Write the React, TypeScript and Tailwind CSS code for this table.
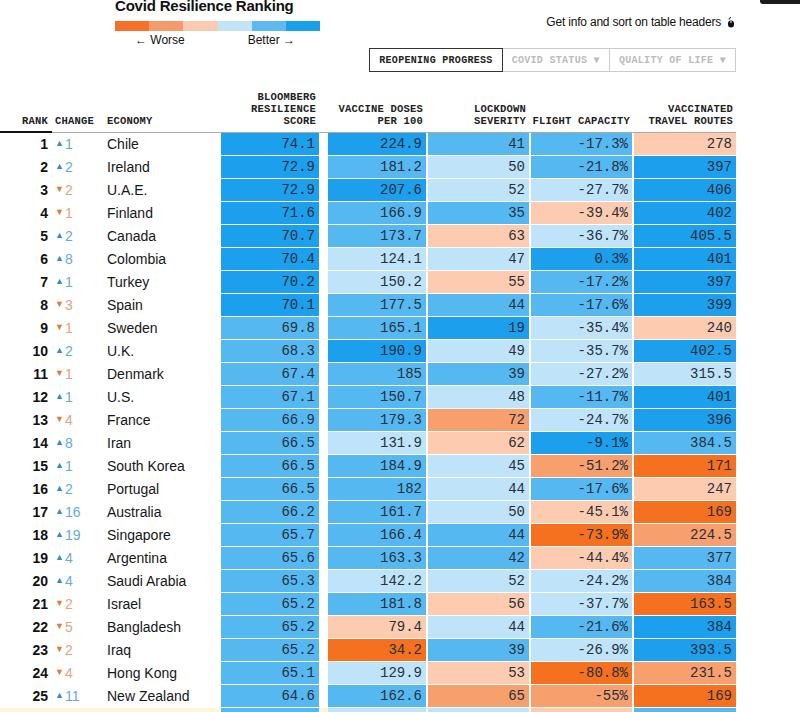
const cellBg: Record<string, string> = {
  D: "bg-[#1c9fec]",
  M: "bg-[#55b8f1]",
  L: "bg-[#bfe3f8]",
  P: "bg-[#fccbb0]",
  O: "bg-[#f7a06e]",
  X: "bg-[#f5701f]",
}

type Row = [number, "up" | "dn", number, string, string, string, string, string, string, string]

const rows: Row[] = [
  [1, "up", 1, "Chile", "74.1", "224.9", "41", "-17.3%", "278", "DDMMP"],
  [2, "up", 2, "Ireland", "72.9", "181.2", "50", "-21.8%", "397", "DMLMD"],
  [3, "dn", 2, "U.A.E.", "72.9", "207.6", "52", "-27.7%", "406", "DDLLD"],
  [4, "dn", 1, "Finland", "71.6", "166.9", "35", "-39.4%", "402", "DMMPD"],
  [5, "up", 2, "Canada", "70.7", "173.7", "63", "-36.7%", "405.5", "DMPLD"],
  [6, "up", 8, "Colombia", "70.4", "124.1", "47", "0.3%", "401", "DLLDD"],
  [7, "up", 1, "Turkey", "70.2", "150.2", "55", "-17.2%", "397", "DLPMD"],
  [8, "dn", 3, "Spain", "70.1", "177.5", "44", "-17.6%", "399", "DMMMD"],
  [9, "dn", 1, "Sweden", "69.8", "165.1", "19", "-35.4%", "240", "MMDLP"],
  [10, "up", 2, "U.K.", "68.3", "190.9", "49", "-35.7%", "402.5", "MDLLD"],
  [11, "dn", 1, "Denmark", "67.4", "185", "39", "-27.2%", "315.5", "MMMLL"],
  [12, "up", 1, "U.S.", "67.1", "150.7", "48", "-11.7%", "401", "MMLMD"],
  [13, "dn", 4, "France", "66.9", "179.3", "72", "-24.7%", "396", "MMOLD"],
  [14, "up", 8, "Iran", "66.5", "131.9", "62", "-9.1%", "384.5", "MLPDM"],
  [15, "up", 1, "South Korea", "66.5", "184.9", "45", "-51.2%", "171", "MMLOX"],
  [16, "up", 2, "Portugal", "66.5", "182", "44", "-17.6%", "247", "MMLMP"],
  [17, "up", 16, "Australia", "66.2", "161.7", "50", "-45.1%", "169", "MMLPX"],
  [18, "up", 19, "Singapore", "65.7", "166.4", "44", "-73.9%", "224.5", "MMMXO"],
  [19, "up", 4, "Argentina", "65.6", "163.3", "42", "-44.4%", "377", "MMMPM"],
  [20, "up", 4, "Saudi Arabia", "65.3", "142.2", "52", "-24.2%", "384", "MLLLM"],
  [21, "dn", 2, "Israel", "65.2", "181.8", "56", "-37.7%", "163.5", "MMPLX"],
  [22, "dn", 5, "Bangladesh", "65.2", "79.4", "44", "-21.6%", "384", "MPLMD"],
  [23, "dn", 2, "Iraq", "65.2", "34.2", "39", "-26.9%", "393.5", "MXMLD"],
  [24, "dn", 4, "Hong Kong", "65.1", "129.9", "53", "-80.8%", "231.5", "MLPXO"],
  [25, "up", 11, "New Zealand", "64.6", "162.6", "65", "-55%", "169", "MMOOX"],
  [26, "dn", 1, "Norway", "64.4", "150.9", "46", "-40.1%", "384", "MLLPM"],
]

const mono = "font-['Liberation_Mono',monospace]"
const sans = "font-['Liberation_Sans',Arial,sans-serif]"

function MouseIcon() {
  return (
    <svg width="8" height="11" viewBox="0 0 8 11" className="ml-[6px]">
      <path d="M4 0.5 C2.4 0.5 2 1.6 2.2 2.6" stroke="#111" strokeWidth="1" fill="none" />
      <rect x="1" y="3.5" width="6" height="7" rx="3" fill="#111" />
      <line x1="4" y1="4" x2="4" y2="6" stroke="#fff" strokeWidth="1" />
    </svg>
  )
}

function Cell({ v, c, w, ml }: { v: string; c: string; w: string; ml: string }) {
  return (
    <div className={`${w} ${ml} ${cellBg[c]} h-[22px] flex items-center justify-end pr-[4px] text-[14px] text-[#26303c] ${mono}`}>
      {v}
    </div>
  )
}

export default function App() {
  return (
    <div className={`relative w-[800px] h-[712px] overflow-hidden bg-white text-[#111] ${sans}`}>
      <div className="absolute top-0 right-0 w-[40px] h-[4px] bg-[#1b1b1b] rounded-bl-[3px]" />

      {/* top: legend + tabs */}
      <div className="w-[736px] flex justify-between">
        <div className="pl-[115px] mt-[-3px]">
          <div className="text-[15px] font-bold leading-[18px] tracking-[-0.2px]">Covid Resilience Ranking</div>
          <div className="flex mt-[6px] w-[205px] h-[10px]">
            <div className="flex-1 bg-[#f7702a]" />
            <div className="flex-1 bg-[#f59a6c]" />
            <div className="flex-1 bg-[#fbcbb1]" />
            <div className="flex-1 bg-[#c1e4f7]" />
            <div className="flex-1 bg-[#5db9f0]" />
            <div className="flex-1 bg-[#1a9fec]" />
          </div>
          <div className="flex justify-between pl-[20px] pr-[25px] mt-[2px] text-[12px] leading-[15px]">
            <span>← Worse</span>
            <span>Better →</span>
          </div>
        </div>
        <div className="flex flex-col items-end">
          <div className="flex items-center mt-[15px] pr-[1px] text-[12px] leading-[14px] tracking-[-0.2px]">
            Get info and sort on table headers
            <MouseIcon />
          </div>
          <div className={`flex mt-[19px] text-[10px] font-bold tracking-[0.3px] ${mono}`}>
            <div className="h-[24px] px-[9px] flex items-center border border-[#333] text-[#222]">REOPENING PROGRESS</div>
            <div className="h-[24px] px-[9px] flex items-center border border-l-0 border-[#ccc] text-[#bbb]">COVID STATUS ▼</div>
            <div className="h-[24px] px-[9px] flex items-center border border-l-0 border-[#ccc] text-[#bbb]">QUALITY OF LIFE ▼</div>
          </div>
        </div>
      </div>

      {/* table header */}
      <div className={`flex items-end w-[736px] mt-[19px] pb-[4px] text-[10.5px] font-bold leading-[12px] tracking-[0.2px] text-[#222] ${mono}`}>
        <div className="w-[52px] text-right pr-[4px]">RANK</div>
        <div className="w-[55px] pl-[3px]">CHANGE</div>
        <div className="w-[114px]">ECONOMY</div>
        <div className="w-[98px] text-right pr-[3px]">BLOOMBERG<br />RESILIENCE<br />SCORE</div>
        <div className="w-[98px] ml-[9px] text-right pr-[3px]">VACCINE DOSES<br />PER 100</div>
        <div className="w-[101px] ml-[2px] text-right pr-[3px]">LOCKDOWN<br />SEVERITY</div>
        <div className="w-[101px] ml-[2px] text-right pr-[2px]">FLIGHT CAPACITY</div>
        <div className="w-[102px] ml-[2px] text-right pr-[3px]">VACCINATED<br />TRAVEL ROUTES</div>
      </div>
      <div className="flex w-[736px] h-[2px] items-end">
        <div className="w-[52px] h-[2px] bg-[#111]" />
        <div className="flex-1 h-px bg-[#aaa]" />
      </div>

      {/* rows */}
      <div className="flex flex-col w-[736px]">
        {rows.map((r) => {
          const [rank, dir, ch, name, s, v, l, f, t, c] = r
          const up = dir === "up"
          return (
            <div key={rank} className={`flex items-start h-[23px] ${rank === 26 ? "bg-[#fdf6d9]" : ""}`}>
              <div className="w-[52px] h-[22px] flex items-center justify-end pr-[4px] text-[14px] font-bold">{rank}</div>
              <div className="w-[55px] h-[22px] flex items-center pl-[3px] text-[14px]">
                <span className={`text-[9px] mr-[1px] ${up ? "text-[#2f8fc4]" : "text-[#e07b3a]"}`}>{up ? "▲" : "▼"}</span>
                <span className={up ? "text-[#62acd8]" : "text-[#e6a37c]"}>{ch}</span>
              </div>
              <div className="w-[114px] h-[22px] flex items-center text-[14px] text-[#161616]">{name}</div>
              <Cell v={s} c={c[0]} w="w-[98px]" ml="" />
              <Cell v={v} c={c[1]} w="w-[98px]" ml="ml-[9px]" />
              <Cell v={l} c={c[2]} w="w-[101px]" ml="ml-[2px]" />
              <Cell v={f} c={c[3]} w="w-[101px]" ml="ml-[2px]" />
              <Cell v={t} c={c[4]} w="w-[102px]" ml="ml-[2px]" />
            </div>
          )
        })}
      </div>
    </div>
  )
}
